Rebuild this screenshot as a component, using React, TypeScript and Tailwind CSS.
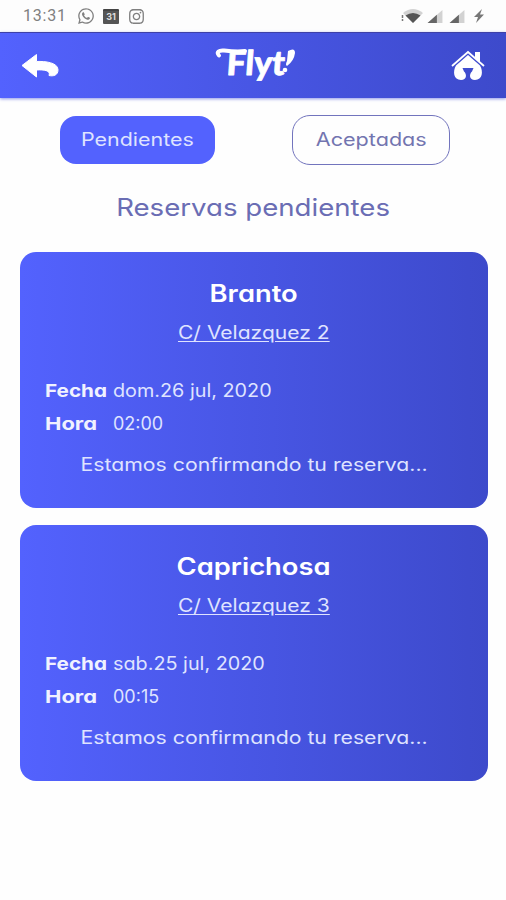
import { FaInstagram, FaWhatsapp } from "react-icons/fa";

type Booking = {
  name: string;
  address: string;
  date: string;
  time: string;
};

const bookings: Booking[] = [
  { name: "Branto", address: "C/ Velazquez 2", date: "dom.26 jul, 2020", time: "02:00" },
  { name: "Caprichosa", address: "C/ Velazquez 3", date: "sab.25 jul, 2020", time: "00:15" },
];

function SignalIcon() {
  return (
    <svg viewBox="0 0 16 14" className="h-[13px] w-4">
      <path d="M0 14 16 0v14z" fill="#d2d2d2" />
      <path d="M0 14 10 5v9z" fill="#666" />
    </svg>
  );
}

function StatusBar() {
  return (
    <div className="flex h-8 items-center bg-[#fdfdfd] pl-[23px] pr-[22px] text-[#808080]">
      <span className="w-[54px] font-['Roboto'] text-base tracking-[0.8px]">13:31</span>
      <FaWhatsapp className="h-[18px] w-[18px]" />
      <span className="ml-2 flex h-[15px] w-4 items-center justify-center rounded-[1px] border-t-2 border-[#444] bg-[#555] text-[9px] font-bold text-[#ddd]">
        31
      </span>
      <FaInstagram className="ml-[9px] h-[17px] w-[17px]" />
      <div className="ml-auto flex items-center">
        <svg viewBox="0 0 22 14" className="h-[14px] w-[22px]">
          <path d="M2 4Q12-4 22 4L12 14z" fill="#d2d2d2" />
          <path d="M4.500 6.500q7.500-5 15 0L12 14z" fill="#555" />
          <path d="M1.500 6v3M1.500 10v2" stroke="#777" strokeWidth="1.500" />
        </svg>
        <span className="ml-1"><SignalIcon /></span>
        <span className="ml-[6px]"><SignalIcon /></span>
        <svg viewBox="0 0 10 14" className="ml-[9px] h-3.5 w-2.5">
          <path d="M8 0 0 8h4l-2 6 8-8.500H6z" fill="#777" />
        </svg>
      </div>
    </div>
  );
}

function Header() {
  return (
    <header className="flex h-[66px] items-center justify-between border-t border-[#3d40a8] bg-gradient-to-r from-[#5362fe] to-[#3d4acb] px-[21px] shadow-[0_1px_3px_#8d96e8]">
      <svg viewBox="0 0 38 26" className="h-[26px] w-[38px]">
        <path
          d="M1 12.500 15.500 1.500v7c9-.4 21 1 21.500 8 .2 6-5 7-9 6 2-5-5-6-12.500-5.500v7z"
          fill="#fff"
          stroke="#fff"
          strokeLinejoin="round"
        />
      </svg>
      <svg viewBox="0 0 82 38" className="h-[38px] w-[82px] overflow-visible" role="img">
        <path d="M5 8.500C2 5 5 3 10 3.500c7 .8 13 1.500 21 .5" fill="none" stroke="#fff" strokeWidth="4" strokeLinecap="round" />
        <text
          x="13"
          y="28"
          textLength="58"
          lengthAdjust="spacingAndGlyphs"
          fill="#fff"
          stroke="#fff"
          strokeWidth="0.800"
          strokeLinejoin="round"
          transform="skewX(-4) translate(1 0)"
          className="font-['Lato'] text-[34px] font-black"
        >
          Flyt
        </text>
        <path d="M74 4q7-4 7 2-1 8-8 13-2-1 0-5z" fill="#fff" />
        <circle cx="71" cy="23" r="2.300" fill="#fff" />
      </svg>
      <svg viewBox="0 0 34 32" className="h-8 w-[34px]">
        <path d="M24 2h5v11l-5-5z" fill="#fff" />
        <path d="M1 16 17 2 33 16" fill="none" stroke="#fff" strokeWidth="1.800" />
        <path
          d="M17 5 29 15.500c3.500 6 2.500 14.500-5 14.500-6 0-6-6-3-8.500l1.500-3.500h-11l1.500 3.500c3 2.500 3 8.500-3 8.500-7.500 0-8.500-8.500-5-14.500z"
          fill="#fff"
        />
      </svg>
    </header>
  );
}

function BookingCard({ booking }: { booking: Booking }) {
  return (
    <article className="h-64 rounded-2xl bg-gradient-to-r from-[#5362fe] to-[#3d4acb] px-[25px] pt-[26px] text-lg text-[#dfe3ff]">
      <h2 className="text-center text-2xl leading-8 font-semibold text-white">
        <span className="inline-block scale-x-[1.14]">{booking.name}</span>
      </h2>
      <p className="mt-[9px] text-center leading-7">
        <span className="inline-block scale-x-[1.17] underline underline-offset-2">{booking.address}</span>
      </p>
      <dl className="mt-[27px] leading-[33px]">
        <div className="flex">
          <dt className="w-[68px] font-bold text-[#f0f2ff]">
            <span className="inline-block origin-left scale-x-[1.15]">Fecha</span>
          </dt>
          <dd className="origin-left scale-x-110">{booking.date}</dd>
        </div>
        <div className="flex">
          <dt className="w-[68px] font-bold text-[#f0f2ff]">
            <span className="inline-block origin-left scale-x-[1.22]">Hora</span>
          </dt>
          <dd>{booking.time}</dd>
        </div>
      </dl>
      <p className="mt-[11px] text-center leading-7 whitespace-nowrap">
        <span className="inline-block scale-x-[1.18]">Estamos confirmando tu reserva...</span>
      </p>
    </article>
  );
}

export default function App() {
  return (
    <main className="min-h-[900px] w-full bg-[#fefefe] font-['Inter',sans-serif] [font-feature-settings:'cv11']">
      <StatusBar />
      <Header />
      <nav className="flex items-center justify-between pt-[17px] pr-14 pl-[60px] text-lg">
        <button className="h-12 w-[155px] rounded-2xl bg-[#5362fe] text-[#dfe3ff]">
          <span className="inline-block scale-x-[1.19]">Pendientes</span>
        </button>
        <button className="h-[50px] w-[158px] rounded-[18px] border border-[#7274bd] text-[#7375b0]">
          <span className="inline-block scale-x-[1.2]">Aceptadas</span>
        </button>
      </nav>
      <h1 className="mt-[27px] text-center text-2xl leading-8 text-[#6a6db4]">
        <span className="inline-block scale-x-[1.15]">Reservas pendientes</span>
      </h1>
      <section className="mt-7 flex flex-col gap-[17px] pr-[18px] pl-5">
        {bookings.map((booking) => (
          <BookingCard key={booking.name} booking={booking} />
        ))}
      </section>
    </main>
  );
}
